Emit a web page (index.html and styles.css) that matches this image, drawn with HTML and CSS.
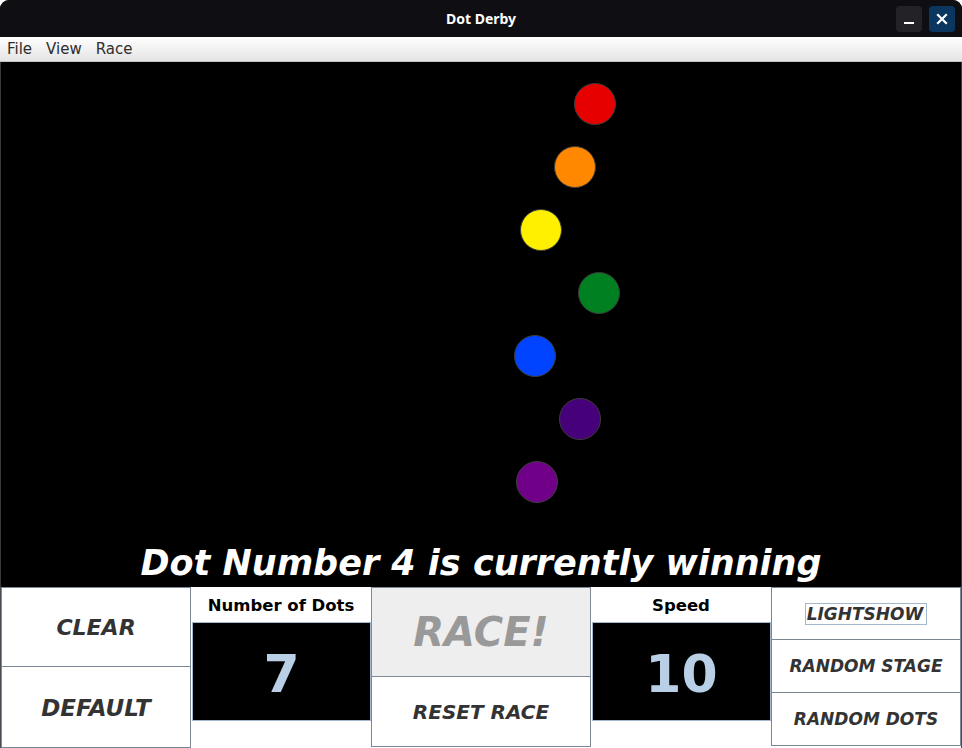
FILE: index.html
```html
<!DOCTYPE html>
<html>
<head>
<meta charset="utf-8">
<title>Dot Derby</title>
<link rel="stylesheet" href="styles.css">
</head>
<body>
<div class="window">
  <div class="titlebar">
    <div class="tb-side"></div>
    <div class="tb-title">Dot Derby</div>
    <div class="tb-side tb-buttons">
      <div class="tb-btn tb-min"><span class="min-bar"></span></div>
      <div class="tb-btn tb-close">
        <svg width="12" height="12" viewBox="0 0 12 12"><path d="M2 2 L10 10 M10 2 L2 10" stroke="#fff" stroke-width="2.2" stroke-linecap="square"/></svg>
      </div>
    </div>
  </div>
  <div class="menubar">
    <span class="menu-item">File</span>
    <span class="menu-item">View</span>
    <span class="menu-item">Race</span>
  </div>
  <div class="stage">
    <div class="dot red" style="left:573px;top:21px"></div>
    <div class="dot orange" style="left:553px;top:84px"></div>
    <div class="dot yellow" style="left:519px;top:147px"></div>
    <div class="dot green" style="left:577px;top:210px"></div>
    <div class="dot blue" style="left:513px;top:273px"></div>
    <div class="dot indigo" style="left:558px;top:336px"></div>
    <div class="dot purple" style="left:515px;top:399px"></div>
    <div class="winner">Dot Number 4 is currently winning</div>
  </div>
  <div class="panel">
    <div class="col col-1">
      <div class="btn btn-big btn-clear">CLEAR</div>
      <div class="btn btn-big btn-default">DEFAULT</div>
    </div>
    <div class="col col-2">
      <div class="label">Number of Dots</div>
      <div class="numbox">7</div>
    </div>
    <div class="col col-3">
      <div class="btn btn-race">RACE!</div>
      <div class="btn btn-reset">RESET RACE</div>
    </div>
    <div class="col col-4">
      <div class="label">Speed</div>
      <div class="numbox">10</div>
    </div>
    <div class="col col-5">
      <div class="btn btn-small"><span class="focus">LIGHTSHOW</span></div>
      <div class="btn btn-small">RANDOM STAGE</div>
      <div class="btn btn-small">RANDOM DOTS</div>
    </div>
  </div>
</div>
</body>
</html>
```
FILE: styles.css
```css
* { box-sizing: border-box; }
html, body { margin: 0; padding: 0; background: #ffffff; }
body { font-family: "DejaVu Sans", sans-serif; }

.window {
  width: 962px;
  height: 748px;
  display: flex;
  flex-direction: column;
  border-radius: 9px 9px 0 0;
  overflow: hidden;
  background: #0f0f13;
}

.titlebar {
  height: 37px;
  flex: none;
  background: #0f0f13;
  display: grid;
  grid-template-columns: 1fr auto 1fr;
  align-items: center;
}
.tb-title {
  color: #ffffff;
  font-family: "Noto Sans", sans-serif;
  font-weight: bold;
  font-size: 14px;
}
.tb-buttons {
  display: flex;
  justify-content: flex-end;
  gap: 7px;
  padding-right: 7px;
}
.tb-btn {
  width: 26px;
  height: 26px;
  border-radius: 4px;
  display: flex;
  align-items: center;
  justify-content: center;
}
.tb-min { background: #232327; align-items: flex-end; padding-bottom: 8px; }
.min-bar { display: block; width: 10px; height: 2px; background: #ffffff; }
.tb-close { background: #0b3660; }

.menubar {
  height: 25px;
  flex: none;
  background: linear-gradient(#ffffff, #e4e4e4);
  border-bottom: 1px solid #c4c4c4;
  display: flex;
  align-items: center;
  gap: 14px;
  padding-left: 7px;
  font-family: "DejaVu Sans", sans-serif;
  font-size: 15px;
  color: #2e2e2e;
}

.stage {
  position: relative;
  height: 525px;
  flex: none;
  background: #000000;
  border-left: 1px solid #3a3a3a;
  border-right: 1px solid #3a3a3a;
  display: flex;
  flex-direction: column;
  justify-content: flex-end;
  padding-bottom: 4px;
}
.dot {
  position: absolute;
  width: 42px;
  height: 42px;
  border-radius: 50%;
  border: 1px solid #3c3c3c;
}
.red { background: #e60000; }
.orange { background: #ff8800; }
.yellow { background: #fff000; }
.green { background: #008020; }
.blue { background: #0044ff; }
.indigo { background: #45007a; }
.purple { background: #710088; }

.winner {
  color: #ffffff;
  font-family: "DejaVu Sans", sans-serif;
  font-weight: bold;
  font-style: italic;
  font-size: 35px;
  text-align: center;
  line-height: normal;
}

.panel {
  height: 161px;
  flex: none;
  background: #ffffff;
  display: flex;
  border-left: 1px solid #4a4f55;
  border-right: 1px solid #4a4f55;
}
.col { display: flex; flex-direction: column; }
.col-1 { width: 190px; }
.col-2 { width: 180px; }
.col-3 { width: 220px; }
.col-4 { width: 180px; }
.col-5 { width: 190px; }

.btn {
  border: 1px solid #7a8795;
  background: #ffffff;
  display: flex;
  align-items: center;
  justify-content: center;
  font-family: "DejaVu Sans", sans-serif;
  font-weight: bold;
  font-style: italic;
  color: #333333;
}
.btn-clear { height: 80px; font-size: 22px; }
.btn-default { height: 81px; font-size: 23px; border-top: none; padding-top: 1px; }
.btn-race {
  height: 90px;
  background: #eeeeee;
  color: #999999;
  font-size: 40px;
  border-color: #7f8a96;
}
.btn-reset {
  height: 70px;
  font-size: 20px;
  border-top: none;
}
.btn-small { height: 53px; font-size: 17px; }
.btn-small + .btn-small { border-top: none; }
.focus {
  border: 1px solid #a3b8cc;
  padding: 1px 3px 0 1px;
  line-height: 19px;
}

.label {
  height: 35px;
  display: flex;
  align-items: center;
  justify-content: center;
  font-family: "DejaVu Sans", sans-serif;
  font-weight: bold;
  font-size: 16.5px;
  color: #000000;
  padding-top: 2px;
}
.numbox {
  height: 99px;
  margin-left: 1px;
  background: #000000;
  border: 1px solid #a3b8cc;
  display: flex;
  align-items: center;
  justify-content: center;
  font-family: "DejaVu Sans", sans-serif;
  font-weight: bold;
  font-size: 52px;
  color: #b8cfe6;
  padding-top: 4px;
}
```
